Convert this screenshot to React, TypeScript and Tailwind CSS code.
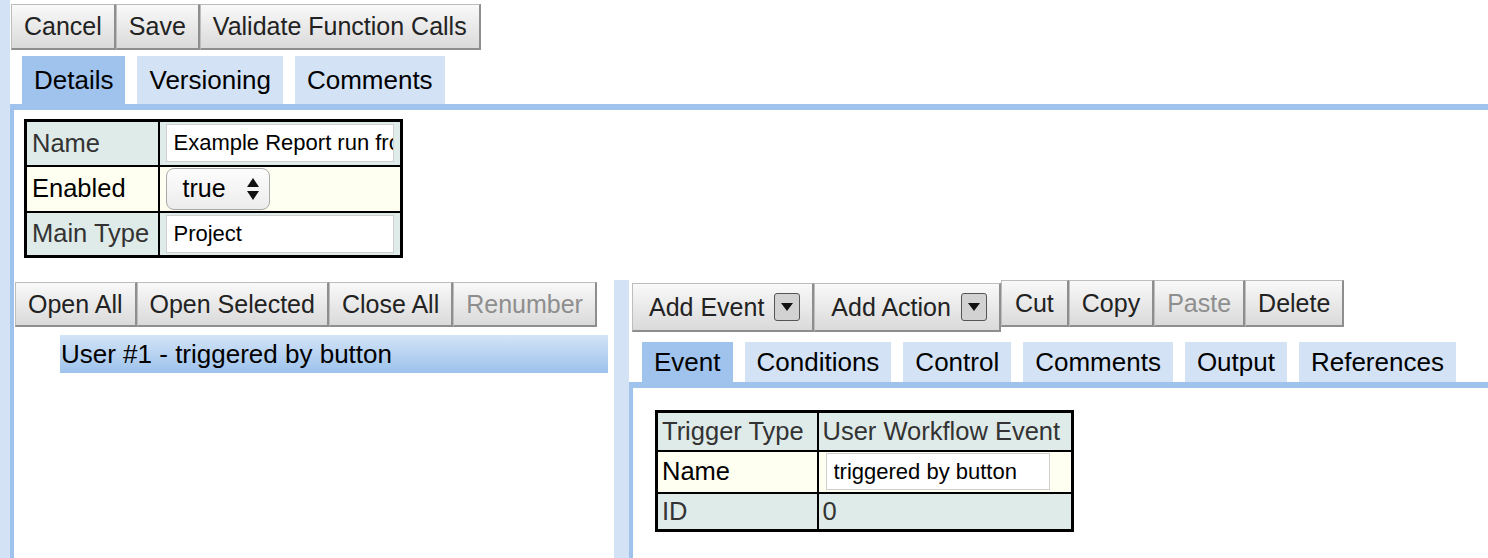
import clsx from "clsx";
import type { ReactNode } from "react";

const teal = "bg-[#dfebe9]";
const cream = "bg-[#fffff1]";

function Btn({
  children,
  disabled,
  className,
}: {
  children: ReactNode;
  disabled?: boolean;
  className?: string;
}) {
  return (
    <button
      type="button"
      className={clsx(
        "flex shrink-0 items-center border border-[#bdbdbd] border-r-2 border-b-2 border-r-[#8e8e8e] border-b-[#8e8e8e] bg-linear-to-b from-[#f9f9f9] to-[#dadada] px-[12px] text-[25px] leading-none",
        disabled ? "text-[#8e8e8e]" : "text-[#222]",
        className
      )}
    >
      {children}
    </button>
  );
}

function DropIcon() {
  return (
    <span className="ml-[10px] grid h-[28px] w-[26px] place-items-center rounded-[3px] border border-[#555] bg-[#d2d2d2]">
      <svg width="12" height="8" viewBox="0 0 12 8">
        <path d="M0 0 L12 0 L6 8 Z" fill="#111" />
      </svg>
    </span>
  );
}

function Tab({ label, active, className }: { label: string; active?: boolean; className?: string }) {
  return (
    <div
      className={clsx(
        "flex items-center px-[12px] text-[26px] leading-none text-black",
        active ? "bg-[#9fc3ec]" : "bg-[#d3e3f5]",
        className
      )}
    >
      {label}
    </div>
  );
}

function TextBox({ value, className }: { value: string; className?: string }) {
  return (
    <input
      type="text"
      readOnly
      value={value}
      className={clsx(
        "block border border-[#cfcfcf] bg-white pl-[7px] text-[22px] leading-none text-black outline-none",
        className
      )}
    />
  );
}

function DetailsTable() {
  const cell = "border-2 border-black px-[5px] align-middle";
  return (
    <table className="table-fixed border-collapse border-[3px] border-black text-[25.5px] leading-none">
      <colgroup>
        <col className="w-[133px]" />
        <col className="w-[243px]" />
      </colgroup>
      <tbody>
        <tr className="h-[45px]">
          <td className={clsx(cell, teal, "text-[#333]")}>Name</td>
          <td className={clsx(cell, teal, "pl-[6px]")}>
            <TextBox value="Example Report run from button" className="h-[38px] w-[228px]" />
          </td>
        </tr>
        <tr className="h-[46px]">
          <td className={clsx(cell, cream)}>Enabled</td>
          <td className={clsx(cell, cream, "pl-[6px]")}>
            <div className="flex h-[42px] w-[104px] items-center justify-between rounded-[8px] border border-[#a9a9a9] bg-linear-to-b from-[#fdfdfd] to-[#ececec] pl-[16px] pr-[9px] text-[25px]">
              <span>true</span>
              <svg width="14" height="24" viewBox="0 0 14 24">
                <path d="M7 1 L13 10 L1 10 Z" fill="#111" />
                <path d="M1 14 L13 14 L7 23 Z" fill="#111" />
              </svg>
            </div>
          </td>
        </tr>
        <tr className="h-[45px]">
          <td className={clsx(cell, teal, "text-[#333]")}>Main Type</td>
          <td className={clsx(cell, teal, "pl-[6px]")}>
            <TextBox value="Project" className="h-[38px] w-[228px]" />
          </td>
        </tr>
      </tbody>
    </table>
  );
}

function EventTable() {
  const cell = "border-2 border-black px-[4px] align-middle whitespace-nowrap";
  return (
    <table className="table-fixed border-collapse border-[3px] border-black text-[25.5px] leading-none">
      <colgroup>
        <col className="w-[161px]" />
        <col className="w-[255px]" />
      </colgroup>
      <tbody>
        <tr className="h-[39px]">
          <td className={clsx(cell, teal, "text-[#333]")}>Trigger Type</td>
          <td className={clsx(cell, teal, "text-[#333]")}>User Workflow Event</td>
        </tr>
        <tr className="h-[42px]">
          <td className={clsx(cell, cream)}>Name</td>
          <td className={clsx(cell, cream, "pl-[7px]")}>
            <TextBox value="triggered by button" className="h-[37px] w-[224px]" />
          </td>
        </tr>
        <tr className="h-[38px]">
          <td className={clsx(cell, teal, "text-[#333]")}>ID</td>
          <td className={clsx(cell, teal, "text-[#333]")}>0</td>
        </tr>
      </tbody>
    </table>
  );
}

export default function App() {
  return (
    <div className="flex h-[558px] w-[1488px] overflow-hidden bg-white font-['Liberation_Sans',Arial,sans-serif] text-black">
      <div className="w-[10px] shrink-0 bg-[#d3e3f5]" />

      <div className="flex min-w-0 flex-1 flex-col">
        {/* top toolbar */}
        <div className="flex pl-[1px] pt-[4px]">
          <Btn className="h-[46px]">Cancel</Btn>
          <Btn className="h-[46px]">Save</Btn>
          <Btn className="h-[46px]">Validate Function Calls</Btn>
        </div>

        <div className="mt-[6px] flex h-[54px] gap-[12px] border-b-[6px] border-[#9fc3ec] pl-[12px]">
          <Tab label="Details" active />
          <Tab label="Versioning" />
          <Tab label="Comments" />
        </div>

        <div className="flex min-h-0 flex-1 flex-col border-l-4 border-[#9fc3ec]">
          <div className="pl-[10px] pt-[9px]">
            <DetailsTable />
          </div>

          <div className="mt-[22px] flex min-h-0 flex-1">
            {/* tree pane */}
            <div className="w-[600px] shrink-0 pl-[1px] pt-[2px]">
              <div className="flex">
                <Btn className="h-[45px]">Open All</Btn>
                <Btn className="h-[45px]">Open Selected</Btn>
                <Btn className="h-[45px]">Close All</Btn>
                <Btn className="h-[45px]" disabled>
                  Renumber
                </Btn>
              </div>
              <div className="ml-[45px] mt-[8px] flex h-[38px] w-[548px] items-center bg-linear-to-b from-[#d3e4f7] to-[#9dc2ec] pl-[1px] text-[26px] leading-none text-black">
                User #1 - triggered by button
              </div>
            </div>

            {/* node pane */}
            <div className="flex min-w-0 flex-1">
              <div className="w-[15px] shrink-0 bg-[#d3e3f5]" />
              <div className="flex min-w-0 flex-1 flex-col">
                <div className="flex items-start pl-[3px]">
                  <Btn className="mt-[3px] h-[49px] pl-[16px]">
                    Add Event
                    <DropIcon />
                  </Btn>
                  <Btn className="mt-[3px] h-[49px] pl-[16px]">
                    Add Action
                    <DropIcon />
                  </Btn>
                  <Btn className="h-[47px] px-[13px]">Cut</Btn>
                  <Btn className="h-[47px]">Copy</Btn>
                  <Btn className="h-[47px]" disabled>
                    Paste
                  </Btn>
                  <Btn className="h-[47px]">Delete</Btn>
                </div>

                <div className="mt-[10px] flex h-[46px] gap-[12px] border-b-[6px] border-[#9fc3ec] pl-[13px]">
                  <Tab label="Event" active />
                  <Tab label="Conditions" />
                  <Tab label="Control" />
                  <Tab label="Comments" />
                  <Tab label="Output" />
                  <Tab label="References" />
                </div>

                <div className="flex-1 border-l-4 border-[#9fc3ec] pl-[22px] pt-[22px]">
                  <EventTable />
                </div>
              </div>
            </div>
          </div>
        </div>
      </div>
    </div>
  );
}
